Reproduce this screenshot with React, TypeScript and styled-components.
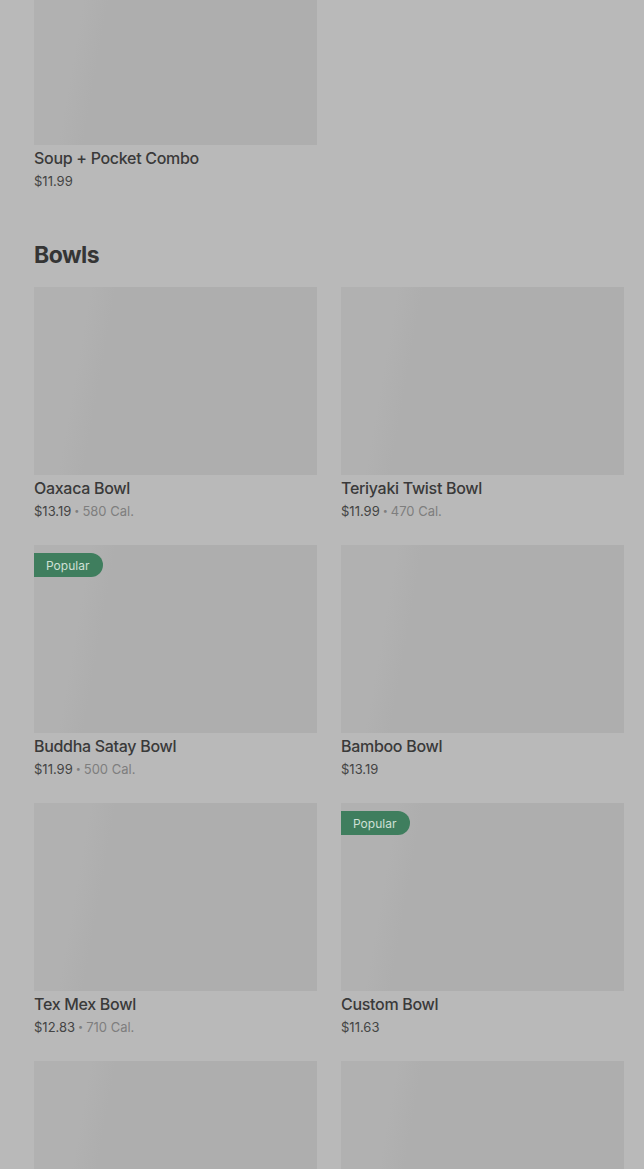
import React from "react"
import styled, { createGlobalStyle } from "styled-components"

const GlobalStyle = createGlobalStyle`
    html, body {
        margin: 0;
        padding: 0;
        background: #b9b9b9;
    }
    body {
        font-family: Inter, "Noto Sans", Arial, sans-serif;
        -webkit-font-smoothing: antialiased;
    }
`;

type Item = {
    name: string
    price: string
    cal?: string
    popular?: boolean
}

const combos: Item[] = [
    { name: "Soup + Pocket Combo", price: "$11.99" },
]

const bowls: Item[] = [
    { name: "Oaxaca Bowl", price: "$13.19", cal: "580 Cal." },
    { name: "Teriyaki Twist Bowl", price: "$11.99", cal: "470 Cal." },
    { name: "Buddha Satay Bowl", price: "$11.99", cal: "500 Cal.", popular: true },
    { name: "Bamboo Bowl", price: "$13.19" },
    { name: "Tex Mex Bowl", price: "$12.83", cal: "710 Cal." },
    { name: "Custom Bowl", price: "$11.63", popular: true },
    { name: "", price: "" },
    { name: "", price: "" },
]

const Page = styled.main`
    /* page is scrolled: first card's image starts above the viewport */
    margin-top: -43px;
    padding: 0 20px 0 34px;
    display: flex;
    flex-direction: column;
    gap: 48px;
`;

const Section = styled.section`
    display: flex;
    flex-direction: column;
`;

const SectionTitle = styled.h2`
    margin: 0 0 16px;
    font-size: 23px;
    line-height: 32px;
    font-weight: 700;
    letter-spacing: -0.5px;
    color: #353535;
`;

const Grid = styled.div`
    display: grid;
    grid-template-columns: 283px 283px;
    column-gap: 24px;
    row-gap: 24px;
`;

const Card = styled.div`
    display: flex;
    flex-direction: column;
    height: 234px;
`;

const Thumb = styled.div`
    position: relative;
    height: 188px;
    background: linear-gradient(100deg, #b1b1b1 0%, #b1b1b1 18%, #aeaeae 26%, #aeaeae 100%);
`;

const Badge = styled.span`
    position: absolute;
    top: 8px;
    left: 0;
    height: 24px;
    padding: 0 14px 0 12px;
    display: flex;
    align-items: center;
    background: #3f7e5e;
    color: #cfe0d6;
    font-size: 12px;
    font-weight: 400;
    border-radius: 0 12px 12px 0;
`;

const Name = styled.div`
    margin-top: 3px;
    font-size: 16px;
    line-height: 20px;
    font-weight: 500;
    color: #3a3a3a;
    letter-spacing: -0.3px;
`;

const Meta = styled.div`
    margin-top: 4px;
    font-size: 13px;
    line-height: 18px;
    color: #444;
    display: flex;
    align-items: center;
    gap: 3px;
`;

const Cal = styled.span`
    color: #7e7e7e;
`;

const Dot = styled.span`
    color: #7e7e7e;
    font-size: 9px;
`;

const MenuCard = ({ item }: { item: Item }) => (
    <Card>
        <Thumb>
            {item.popular ? <Badge>Popular</Badge> : null}
        </Thumb>
        {item.name ? <Name>{item.name}</Name> : null}
        {item.price ?
            <Meta>
                <span>{item.price}</span>
                {item.cal ? <><Dot>•</Dot><Cal>{item.cal}</Cal></> : null}
            </Meta> : null
        }
    </Card>
)

export default function App() {
    return (
        <>
            <GlobalStyle />
            <Page>
                <Section>
                    <Grid>
                        {combos.map((item, i) => <MenuCard key={i} item={item} />)}
                    </Grid>
                </Section>
                <Section>
                    <SectionTitle>Bowls</SectionTitle>
                    <Grid>
                        {bowls.map((item, i) => <MenuCard key={i} item={item} />)}
                    </Grid>
                </Section>
            </Page>
        </>
    )
}
